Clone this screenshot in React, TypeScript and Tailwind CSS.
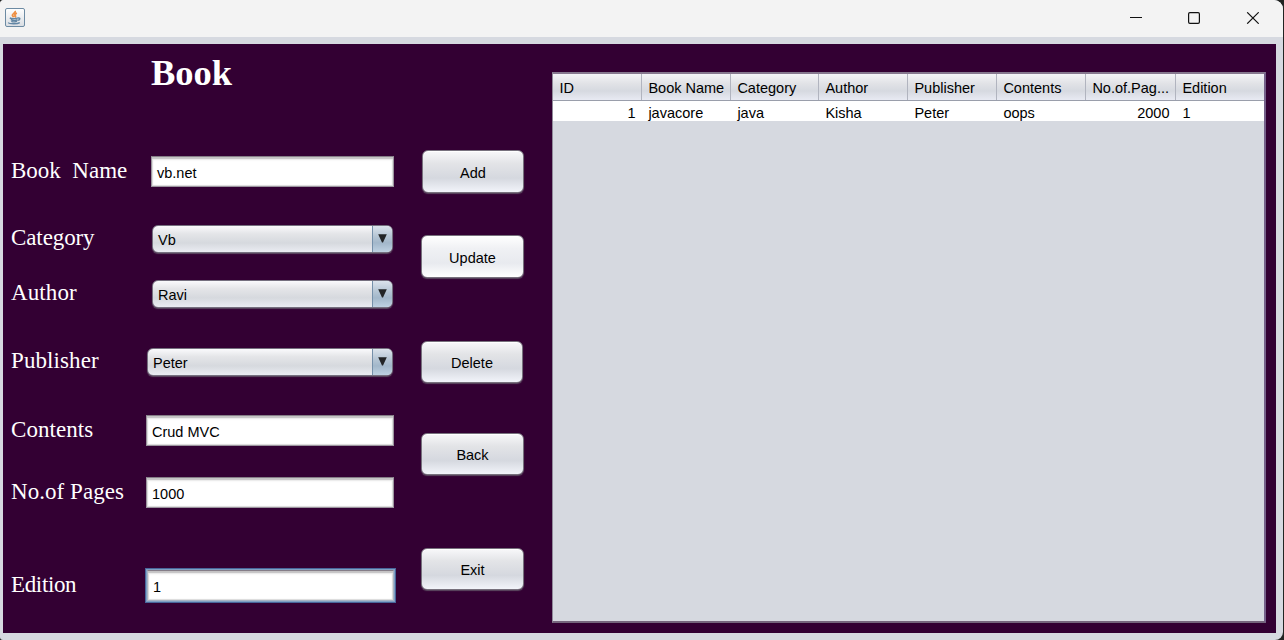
import React from "react";

const labels = [
  { text: "Book  Name", cls: "mt-[73px] tracking-[0px]" },
  { text: "Category", cls: "mt-[43px] tracking-[-0.1px]" },
  { text: "Author", cls: "mt-[31px] tracking-[0.1px]" },
  { text: "Publisher", cls: "mt-[44px] tracking-[0.1px]" },
  { text: "Contents", cls: "mt-[45px] tracking-[0.05px]" },
  { text: "No.of Pages", cls: "mt-[38px] tracking-[0.05px]" },
  { text: "Edition", cls: "mt-[69px] tracking-[-0.35px]" },
];

const buttons = [
  { text: "Add", cls: "mt-[106px] ml-px h-[43px] w-[102px]" },
  { text: "Update", cls: "mt-[42px] h-[43px] w-[103px]", hot: true },
  { text: "Delete", cls: "mt-[63px] h-[42px] w-[102px]" },
  { text: "Back", cls: "mt-[50px] h-[42px] w-[103px]" },
  { text: "Exit", cls: "mt-[73px] h-[42px] w-[103px]" },
];

const columns = [
  { title: "ID", value: "1", right: true },
  { title: "Book Name", value: "javacore" },
  { title: "Category", value: "java" },
  { title: "Author", value: "Kisha" },
  { title: "Publisher", value: "Peter" },
  { title: "Contents", value: "oops" },
  { title: "No.of.Pag...", value: "2000", right: true },
  { title: "Edition", value: "1" },
];

const grid = "grid grid-cols-[89px_89px_88px_89px_89px_89px_90px_89px]";

function Field({ value, cls }: { value: string; cls: string }) {
  return (
    <div
      className={`flex h-[31px] shrink-0 items-center border border-[#9b949e] border-t-[#857d87] bg-white pt-[2px] pl-[5px] shadow-[inset_0_2px_1px_#c4c3c4,inset_0_3px_2px_#ececec,inset_1px_0_1px_#d5d5d5,inset_-1px_0_1px_#d5d5d5,inset_0_-1px_1px_#dddddd] ${cls}`}
    >
      {value}
    </div>
  );
}

function Combo({ value, cls }: { value: string; cls: string }) {
  return (
    <div
      className={`flex h-[28px] shrink-0 overflow-hidden rounded-[6px] border border-[#75707f] bg-[linear-gradient(#fafafc_0%,#e4e5e8_30%,#d6d9de_65%,#eaecf2_100%)] shadow-[0_1px_1px_#5d4a62] ${cls}`}
    >
      <div className="flex flex-1 items-center pt-[2px] pl-[5px]">{value}</div>
      <div className="flex w-[20px] justify-center border-l border-[#7590aa] bg-[linear-gradient(#dbe3ec_0%,#b5c5d4_40%,#a2b7ca_65%,#bed1e2_100%)] pt-[8px]">
        <svg width="9" height="9" viewBox="0 0 9 9">
          <path d="M0.2 0.2H8.8L5 8.6H4Z" fill="#222426" />
        </svg>
      </div>
    </div>
  );
}

function JavaIcon() {
  return (
    <svg width="20" height="19" viewBox="0 0 20 19" fill="none">
      <defs>
        <linearGradient id="tile" x1="0" y1="0" x2="0" y2="1">
          <stop stopColor="#ffffff" />
          <stop offset="1" stopColor="#d9dde2" />
        </linearGradient>
      </defs>
      <rect x="0.5" y="0.5" width="19" height="18" rx="1.5" fill="url(#tile)" stroke="#6d8ba3" />
      <path d="M10.2 2.8C11 4.8 7.2 5.6 7.4 7.3C7.6 8.3 8.6 8.6 8.8 9.3M11.9 5.2C9.7 6 9.4 6.9 10.3 7.8C10.8 8.4 10.4 9 9.9 9.3" stroke="#ee9044" strokeWidth="1.8" />
      <path d="M4.8 10C6.5 10.8 11 10.8 13 9.9M5.8 11.6C8 12.5 10.8 12.5 12.4 11.6M6.3 13.3C8 14 10.5 14 12 13.2M12.8 10C15.8 9.5 15.3 12 12.6 12.4M3.2 14.6C4.5 16.1 12.5 16.1 14.8 14.6" stroke="#6286a4" strokeWidth="1.4" />
    </svg>
  );
}

export default function App() {
  return (
    <div className="h-[640px] w-[1284px] overflow-hidden bg-[#222422] font-['Liberation_Sans',Arial,sans-serif] text-[14.5px] leading-[18px] text-black">
      <div className="flex h-[640px] w-[1283px] flex-col overflow-hidden rounded-tl-[4px] rounded-tr-[9px] rounded-br-[8px] rounded-bl-[3px] bg-[#d6d9e0]">
        <header className="flex h-[37px] shrink-0 items-start justify-between bg-[#f3f3f3] pt-[8px] pr-[23px] pl-[5px]">
          <JavaIcon />
          <div className="flex gap-[46px] pt-[4px] pr-px">
            <svg width="12" height="12" viewBox="0 0 12 12" stroke="#111" fill="none">
              <path d="M0 5.5H12" />
            </svg>
            <svg width="12" height="12" viewBox="0 0 12 12" stroke="#111" fill="none" strokeWidth="1.2">
              <rect x="0.6" y="0.6" width="10.8" height="10.8" rx="1.3" />
            </svg>
            <svg width="13" height="12" viewBox="0 0 13 12" stroke="#111" fill="none" strokeWidth="1.2">
              <path d="M1.2 0.3L12.7 11.7M12.7 0.3L1.2 11.7" />
            </svg>
          </div>
        </header>

        <main className="mt-[7px] ml-[3px] flex h-[589px] w-[1273px] bg-[#330033]">
          <section className="flex w-[418px] flex-col">
            <h1 className="mt-[9px] ml-[148px] h-[33px] font-['Liberation_Serif',serif] text-[36.5px] leading-[39px] font-bold text-white">
              Book
            </h1>
            <div className="flex">
              <div className="flex w-[141px] flex-col pl-[8px] font-['Liberation_Serif',serif] text-[23px] text-white">
                {labels.map((l) => (
                  <div key={l.text} className={`h-[24px] leading-[24px] whitespace-pre ${l.cls}`}>
                    {l.text}
                  </div>
                ))}
              </div>
              <div className="flex flex-col">
                <Field value="vb.net" cls="mt-[70px] ml-[7px] w-[243px]" />
                <Combo value="Vb" cls="mt-[38px] ml-[8px] w-[241px]" />
                <Combo value="Ravi" cls="mt-[27px] ml-[8px] w-[241px]" />
                <Combo value="Peter" cls="mt-[40px] ml-[3px] w-[246px]" />
                <Field value="Crud MVC" cls="mt-[39px] ml-[2px] w-[248px]" />
                <Field value="1000" cls="mt-[31px] ml-[2px] w-[248px]" />
                <div className="mt-[60px] ml-px w-[251px] border border-[#48669b] bg-[#7fa0c4] p-px">
                  <Field value="1" cls="w-full border-[#a8b4c4] border-t-[#8f9cb0] pl-[4px]" />
                </div>
              </div>
            </div>
          </section>

          <section className="flex w-[131px] flex-col items-start">
            {buttons.map((b) => (
              <button
                key={b.text}
                className={`flex shrink-0 items-center justify-center rounded-[6px] border border-[#77717d] pt-[2px] shadow-[0_1px_1px_#5b4960,inset_0_1px_0_#ffffff] ${
                  b.hot
                    ? "bg-[linear-gradient(#ffffff_0%,#f0f1f4_30%,#e8eaef_66%,#ffffff_100%)]"
                    : "bg-[linear-gradient(#f8f8fa_0%,#e3e4e7_30%,#d5d8df_66%,#f2f4fa_100%)]"
                } ${b.cls}`}
              >
                {b.text}
              </button>
            ))}
          </section>

          <section className="mt-[28px] h-[551px] w-[714px] border-2 border-t-[#86788f] border-r-[#75618a] border-b-[#75667d] border-l-[#8f8a99] border-l-1 bg-[#d6d9e0]">
            <div className={`${grid} h-[27px] border-b border-[#9a9eab] bg-[linear-gradient(#f4f5f8_0%,#e2e3e7_35%,#d6d9e0_65%,#e8eaf3_100%)]`}>
              {columns.map((c) => (
                <div key={c.title} className="border-r border-[#b1b4bf] pt-[5px] pl-[6.4px] whitespace-nowrap last:border-r-0">
                  {c.title}
                </div>
              ))}
            </div>
            <div className={`${grid} h-[20px] bg-white`}>
              {columns.map((c) => (
                <div key={c.title} className={`pt-[3px] ${c.right ? "pr-[6.5px] text-right" : "pl-[6.4px]"}`}>
                  {c.value}
                </div>
              ))}
            </div>
          </section>
        </main>
      </div>
    </div>
  );
}
